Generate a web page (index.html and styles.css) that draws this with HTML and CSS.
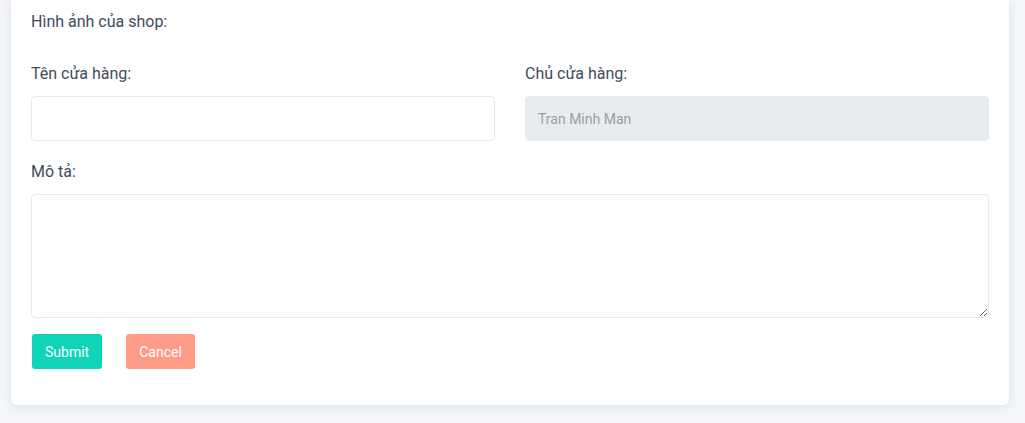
FILE: index.html
```html
<!DOCTYPE html>
<html lang="vi">
<head>
<meta charset="utf-8">
<title>Shop</title>
<link rel="stylesheet" href="styles.css">
</head>
<body>
<div class="page">
  <form class="card">
    <div class="field field-image">
      <label class="label">Hình ảnh của shop:</label>
    </div>
    <div class="row">
      <div class="field col">
        <label class="label">Tên cửa hàng:</label>
        <input class="input" type="text">
      </div>
      <div class="field col">
        <label class="label">Chủ cửa hàng:</label>
        <input class="input input-disabled" type="text" value="Tran Minh Man" disabled>
      </div>
    </div>
    <div class="field">
      <label class="label">Mô tả:</label>
      <textarea class="input textarea"></textarea>
    </div>
    <div class="actions">
      <button type="button" class="btn btn-submit">Submit</button>
      <button type="button" class="btn btn-cancel">Cancel</button>
    </div>
  </form>
</div>
</body>
</html>
```

FILE: styles.css
```css
* { box-sizing: border-box; }
html, body { margin: 0; padding: 0; }
body {
  background: #f4f6fb;
  font-family: Roboto, "Liberation Sans", Arial, sans-serif;
  color: #3e4b5b;
}
.page {
  padding: 0 16px 18px 11px;
}
.card {
  background: #fff;
  border-radius: 0 0 6px 6px;
  box-shadow: 0 2px 8px rgba(180, 190, 215, 0.35);
  padding: 10px 20px 36px 20px;
}
.label {
  display: block;
  font-size: 16px;
  line-height: 24px;
  color: #3e4b5b;
  margin-bottom: 10px;
}
.field-image { margin-bottom: 28px; }
.field-image .label { margin-bottom: 0; }
.row {
  display: flex;
  gap: 30px;
  margin-bottom: 19px;
}
.col { flex: 1; }
.input {
  display: block;
  width: 100%;
  height: 45px;
  border: 1px solid #e8e9ec;
  border-radius: 4px;
  padding: 0 12px;
  font-family: Roboto, "Liberation Sans", Arial, sans-serif;
  font-size: 14px;
  color: #3e4b5b;
  background: #fff;
  outline: none;
}
.input-disabled {
  background: #e9ecef;
  color: #9a9ea3;
  border-color: #e9ecef;
}
.textarea {
  height: 124px;
  padding: 10px 12px;
  resize: vertical;
}
.actions {
  display: flex;
  gap: 24px;
  margin-top: 16px;
  padding-left: 1px;
}
.btn {
  height: 35px;
  border: none;
  border-radius: 3px;
  color: #fff;
  font-family: Roboto, "Liberation Sans", Arial, sans-serif;
  font-size: 14px;
  padding: 0 13px;
  cursor: pointer;
}
.btn-submit { background: #0fd4b8; width: 70px; }
.btn-cancel { background: #ff9b89; width: 69px; }
```
